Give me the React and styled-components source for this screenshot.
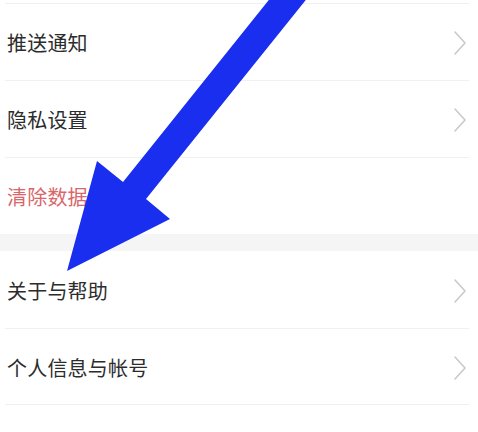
import styled, { createGlobalStyle } from 'styled-components'

const GlobalStyle = createGlobalStyle`
	html, body {
		margin: 0;
		padding: 0;
		background: #fff;
	}
	body {
		font-family: 'Noto Sans CJK SC', 'Noto Sans', sans-serif;
	}
`

const Page = styled.div`
	position: relative;
	width: 478px;
	height: 432px;
	overflow: hidden;
	background: #fff;
	padding-top: 3px;
	box-sizing: border-box;
`

const Group = styled.div`
	padding: 0 9px 0 5px;
`

const Row = styled.div`
	display: flex;
	align-items: center;
	justify-content: space-between;
	height: 77px;
	padding: 2px 2px 0 2px;
	box-sizing: border-box;
	border-top: ${(p) => (p.$noTop ? '1.5px solid transparent' : '1.5px solid #f0f0f0')};
	border-bottom: ${(p) => (p.$last ? '1.5px solid #f0f0f0' : 'none')};
`

const Label = styled.span`
	font-size: 20px;
	line-height: 1;
	color: ${(p) => (p.$danger ? '#d8676b' : '#2c2c2c')};
	letter-spacing: 0.2px;
`

const Divider = styled.div`
	height: 17px;
	background: #f5f5f5;
`

const Arrow = styled.svg`
	position: absolute;
	inset: 0;
	pointer-events: none;
`

function Chevron() {
	return (
		<svg width="14" height="26" viewBox="0 0 14 26" fill="none">
			<path d="M2 2 L12 13 L2 24" stroke="#c8c8c8" strokeWidth="1.5" strokeLinecap="round" strokeLinejoin="round" />
		</svg>
	)
}

function Item({ label, danger, last, noTop, arrow = true }) {
	return (
		<Row $last={last} $noTop={noTop}>
			<Label $danger={danger}>{label}</Label>
			{arrow && <Chevron />}
		</Row>
	)
}

export default function App() {
	return (
		<>
			<GlobalStyle />
			<Page>
				<Group>
					<Item label="推送通知" />
					<Item label="隐私设置" />
					<Item label="清除数据" danger arrow={false} />
				</Group>
				<Divider />
				<Group>
					<Item label="关于与帮助" noTop />
					<Item label="个人信息与帐号" last />
				</Group>
				<Arrow width="478" height="432" viewBox="0 0 478 432">
					<polygon
						points="272,-4 309,-4 146,199 170,219 67,271 97,161 123,182"
						fill="#1a2ef0"
					/>
				</Arrow>
			</Page>
		</>
	)
}
